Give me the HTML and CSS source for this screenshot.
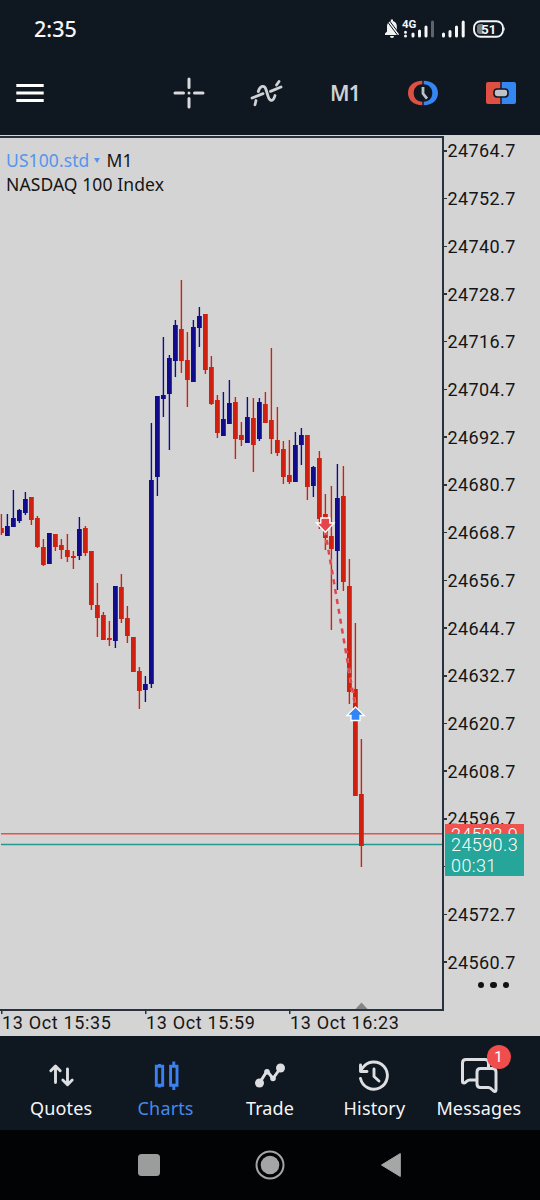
FILE: index.html
```html
<!DOCTYPE html>
<html lang="en">
<head>
  <meta charset="UTF-8">
  <title>US100.std M1</title>
  <link rel="stylesheet" href="styles.css">
</head>
<body>
  <div class="status">
    <span class="clock">2:35</span>
    <svg class="status-icons" width="122" height="22" viewBox="384 18 122 22">
      <path d="M385 35v-1.500l2-2v-5.500c0-2.500 1.800-4.500 3.800-5V19.500h2.200v1.500c2.200.5 3.800 2.500 3.800 5v5.500l2 2V35zM390 36h4a2 2 0 0 1-4 0z" fill="#f0f2f4"/>
      <path d="M386.500 20.500L398.500 36.500M388.500 19.500L399.500 34" stroke="#0f1720" stroke-width="1"/>
      <text x="402" y="28" class="net">4G</text>
      <g stroke="#f4f6f8" stroke-width="3" stroke-linecap="round">
        <path d="M405.500 32.200v.1M405.500 36v.1M413 34v2M419.500 31v5M426 27v9M443.500 34v2M450 31.500v4.500M456.500 27v9M463.200 22v14"/>
        <path d="M432.500 22v14" stroke="#5d646c"/>
      </g>
      <rect x="474" y="21.200" width="29" height="15.600" rx="6.500" fill="none" stroke="#f4f6f8" stroke-width="1.900"/>
      <path d="M483 24v10h-3q-3 0-3-3v-4q0-3 3-3z" fill="#777d83"/>
      <path d="M504 26.500q1.500 2.500 0 5z" fill="#f4f6f8"/>
      <text x="488.800" y="33.500" class="battery">51</text>
    </svg>
  </div>

  <div class="toolbar">
    <svg width="30" height="30" viewBox="15 78 30 30"><path d="M16.300 85.500h27.400M16.300 93h27.400M16.300 100.500h27.400" stroke="#fff" stroke-width="3"/></svg>
    <svg class="tool-cross" width="32" height="32" viewBox="173 77 32 32">
      <path d="M189 79v8.500M189 98.500v8.500M175 93h8.500M194.500 93h8.500M189 93v.01" stroke="#d8dadd" stroke-width="3" stroke-linecap="round"/>
    </svg>
    <svg class="tool-ind" width="34" height="32" viewBox="249 77 34 32">
      <g fill="none" stroke="#cfd2d5" stroke-width="2.800" stroke-linecap="round">
        <path d="M255 104.800L256 100.500M258.300 91.500C260 85.500 264.500 84.800 266 89.500L268 96C269.800 102.500 273.500 101.500 275 95.500M276.500 85L279 81.500"/>
        <path d="M252 98L263 93.600M270.500 91.400L281 87"/>
      </g>
    </svg>
    <span class="timeframe">M1</span>
    <svg class="tool-clock" width="32" height="28" viewBox="407 79 32 28">
      <path d="M422.300 80.800C413.500 80.800 408 86 408 93s5.500 12.200 14.300 12.200V101.800C417 101.500 413.700 98 413.700 93s3.300-8.500 8.600-8.800z" fill="#df5044"/>
      <path d="M423.700 80.800C432.500 80.800 438 86 438 93s-5.500 12.200-14.300 12.200V101.800C429 101.500 432.300 98 432.300 93s-3.300-8.500-8.600-8.800z" fill="#3486f2"/>
      <path d="M423 87v6.500l4 5.200" fill="none" stroke="#b9c2c8" stroke-width="2.800"/>
    </svg>
    <svg class="tool-trade" width="32" height="24" viewBox="485 81 32 24">
      <path d="M500.300 82H488a2 2 0 0 0-2 2v18a2 2 0 0 0 2 2h12.300z" fill="#df5044"/>
      <path d="M501.700 82H514a2 2 0 0 1 2 2v18a2 2 0 0 1-2 2h-12.300z" fill="#3486f2"/>
      <rect x="494" y="89" width="14" height="8" rx="3.200" fill="#bfc3c8" stroke="#0f1720" stroke-width="1.600"/>
    </svg>
  </div>

  <main class="chart">
    <div class="plot">
      <svg id="candles" width="442" height="871" viewBox="0 138 442 871"></svg>
      <div class="legend">
        <div><span class="symbol">US100.std</span><i class="caret"></i><span class="period">M1</span></div>
        <div class="desc">NASDAQ 100 Index</div>
      </div>
    </div>
    <div class="prices" id="prices">
      <div class="tag ask">24592.9</div>
      <div class="tag bid">24590.3<br>00:31</div>
      <div class="more"><i></i><i></i><i></i></div>
    </div>
    <div class="times">
      <span>13 Oct 15:35</span>
      <span>13 Oct 15:59</span>
      <span>13 Oct 16:23</span>
    </div>
  </main>

  <nav class="tabs">
    <a class="tab">
      <svg width="40" height="40" viewBox="41 1055 40 40">
        <path d="M55.500 1082.500v-15.500M50.800 1070.800l4.700-4.700 4.700 4.700M67.500 1069v15.500M62.800 1080l4.700 4.700 4.700-4.700" fill="none" stroke="#dcdee1" stroke-width="2.900" stroke-linecap="round" stroke-linejoin="round"/>
      </svg>
      <span>Quotes</span>
    </a>
    <a class="tab active">
      <svg width="40" height="40" viewBox="145 1055 40 40">
        <path d="M155.300 1066.300h6.400v19h-6.400zM169.600 1066.300h6.400v19h-6.400zM158.500 1064v2M158.500 1085.500v2M172.800 1061.500v4.500M172.800 1085.500v4.500" fill="none" stroke="#3b82f0" stroke-width="2.900"/>
      </svg>
      <span>Charts</span>
    </a>
    <a class="tab">
      <svg width="40" height="40" viewBox="250 1055 40 40">
        <path d="M259.500 1083l7.500-12 6 7.500 7.500-10.500" fill="none" stroke="#dcdee1" stroke-width="3" stroke-linejoin="round"/>
        <g fill="#dcdee1"><circle cx="259.500" cy="1083" r="4.500"/><circle cx="267" cy="1071.800" r="2.800"/><circle cx="273" cy="1078.500" r="2.800"/><circle cx="280.500" cy="1068" r="4.500"/></g>
      </svg>
      <span>Trade</span>
    </a>
    <a class="tab">
      <svg width="40" height="40" viewBox="354 1055 40 40">
        <path d="M360.500 1078.500A13.600 13.600 0 1 0 362.500 1068l-2 3M360.500 1065v6.500h6.500M374 1069v7.500l5 4.500" fill="none" stroke="#dcdee1" stroke-width="2.900" stroke-linecap="round" stroke-linejoin="round"/>
      </svg>
      <span>History</span>
    </a>
    <a class="tab">
      <svg width="40" height="40" viewBox="458 1055 40 40">
        <g fill="none" stroke="#dcdee1" stroke-width="3" stroke-linejoin="round">
          <path d="M475 1080h-6c-3.500 0-3.500 2.500-6 3-1.200 0-1.500-.5-1.500-1.500V1063q0-3.500 3.500-3.500h19q3.500 0 3.500 3.500v5"/>
          <path d="M479.500 1068.500h12q3.500 0 3.500 3.500v17.500c0 1.500-.5 2-1.500 2-2.500-.5-2.500-4-6-4h-8q-3.500 0-3.500-3.500v-12q0-3.500 3.500-3.500z"/>
        </g>
      </svg>
      <span>Messages</span>
      <b class="badge">1</b>
    </a>
  </nav>

  <div class="sysnav">
    <svg width="22" height="22"><rect width="22" height="22" rx="3.500" fill="#9b9d9c"/></svg>
    <svg width="30" height="30"><circle cx="15" cy="15" r="13.500" fill="none" stroke="#a5a5a7" stroke-width="2"/><circle cx="15" cy="15" r="9.300" fill="#a5a5a7"/></svg>
    <svg width="22" height="26"><path d="M20.300 1.500v23L1.500 13z" fill="#a5a7a7" stroke="#a5a7a7" stroke-linejoin="round"/></svg>
  </div>
  <script src="chart.js"></script>
</body>
</html>
```
FILE: styles.css
```css
* {
  box-sizing: border-box;
}
body {
  margin: 0;
  width: 540px;
  height: 1200px;
  overflow: hidden;
  background: #0f1720;
  color: #f4f6f8;
  font-family: Roboto, "Noto Sans", sans-serif;
}
svg {
  display: block;
}
.status {
  height: 58px;
  padding: 0 34px;
  display: flex;
  align-items: center;
  justify-content: space-between;
}
.clock {
  font: 500 21.5px "Noto Sans", sans-serif;
  margin-top: -2px;
}
.net {
  font: 700 11.5px Roboto, sans-serif;
  fill: #f4f6f8;
}
.battery {
  font: 700 13px Roboto, sans-serif;
  fill: #f4f6f8;
  text-anchor: middle;
}
.toolbar {
  height: 77px;
  padding: 0 23px 7px 15px;
  display: flex;
  align-items: center;
}
.tool-cross {
  margin-left: 128px;
}
.tool-ind {
  margin-left: 44px;
}
.timeframe {
  width: 124px;
  text-align: center;
  color: #cfd2d5;
  font: 600 21px/28px "Noto Sans", sans-serif;
  letter-spacing: -0.8px;
}
.tool-trade {
  margin-left: 46px;
}

.chart {
  height: 901px;
  display: grid;
  grid-template-columns: 444px 96px;
  grid-template-rows: 876px 25px;
  background: #d4d4d4;
  color: #151515;
}
.plot {
  position: relative;
  border: solid #26323d;
  border-width: 2px 2px 2px 0;
  margin-top: 1px;
}
.legend {
  position: absolute;
  left: 6px;
  top: 10px;
  font: 17.5px/24px "Noto Sans", sans-serif;
  letter-spacing: 0.1px;
}
.legend > div {
  display: flex;
  align-items: center;
  height: 24px;
}
.symbol {
  color: #5695ed;
}
.caret {
  border: 3px solid transparent;
  border-top: 5px solid #5695ed;
  border-bottom: 0;
  margin: 0 6px 0 5px;
}
.prices {
  position: relative;
  font-size: 18px;
  letter-spacing: 0.4px;
  margin-top: -8px;
}
.price {
  height: 47.72px;
  display: flex;
  align-items: center;
}
.price::before {
  content: "";
  width: 3px;
  height: 1.5px;
  background: #26323d;
}
.price span {
  margin-left: 0.5px;
}
.tag {
  position: absolute;
  left: 1px;
  width: 79px;
  padding-left: 6px;
  color: #fff;
  font-weight: 300;
  line-height: 21px;
}
.ask {
  top: 697px;
  height: 10px;
  overflow: hidden;
  background: #ef5350;
}
.bid {
  top: 707px;
  height: 42px;
  background: #26a69a;
}
.more {
  position: absolute;
  left: 34px;
  top: 855px;
  display: flex;
  gap: 6px;
}
.more i {
  width: 6.4px;
  height: 6.4px;
  border-radius: 50%;
  background: #111;
}
.times {
  grid-column: 1 / 3;
  display: flex;
  padding-left: 1px;
  font-size: 18px;
  line-height: 24px;
  letter-spacing: 0.65px;
}
.times span {
  width: 144px;
  padding-left: 1px;
  background: linear-gradient(#26323d, #26323d) 0 0 / 1.5px 3px no-repeat;
}

.tabs {
  height: 94px;
  padding: 0 9px;
  display: flex;
}
.tab {
  position: relative;
  flex: 1;
  padding-top: 19px;
  display: flex;
  flex-direction: column;
  align-items: center;
  font: 18px/26px "Noto Sans", sans-serif;
  letter-spacing: 0.15px;
}
.active {
  color: #4589ee;
}
.badge {
  position: absolute;
  left: 60px;
  top: 9px;
  width: 24px;
  height: 24px;
  border-radius: 50%;
  background: #ef4e4d;
  color: #fff;
  font: 15px/24px Roboto, sans-serif;
  text-align: center;
}
.sysnav {
  height: 70px;
  padding: 0 138px 0 138px;
  display: flex;
  align-items: center;
  justify-content: space-between;
  background: #020304;
}
```
FILE: chart.js
```js
// colour, high, body top, body bottom, low
const candles = [
  ["r", 514, 528, 533, 535], ["b", 514, 526, 536, 536], ["b", 490, 518, 527, 527],
  ["b", 509, 510, 521, 523], ["b", 492, 499, 513, 515], ["r", 497, 497, 520, 525],
  ["r", 516, 518, 547, 548], ["r", 539, 547, 565, 566], ["b", 533, 533, 564, 564],
  ["r", 534, 534, 547, 551], ["r", 539, 545, 550, 559], ["r", 534, 550, 557, 562],
  ["r", 551, 556, 558, 569], ["b", 517, 529, 556, 560], ["r", 526, 528, 553, 556],
  ["r", 551, 551, 605, 610], ["r", 583, 605, 618, 637], ["r", 612, 615, 640, 640],
  ["r", 621, 638, 640, 646], ["b", 586, 586, 641, 648], ["r", 574, 587, 619, 623],
  ["r", 606, 618, 636, 643], ["r", 637, 637, 672, 672], ["r", 667, 671, 691, 709],
  ["b", 676, 684, 690, 702], ["b", 423, 480, 684, 688], ["b", 396, 396, 477, 496],
  ["b", 337, 395, 399, 417], ["b", 355, 358, 394, 450], ["b", 320, 325, 361, 377],
  ["r", 280, 329, 361, 373], ["r", 332, 360, 380, 407], ["b", 320, 327, 382, 382],
  ["b", 307, 316, 328, 347], ["r", 314, 314, 370, 374], ["r", 356, 367, 404, 405],
  ["r", 395, 400, 433, 438], ["b", 392, 419, 436, 436], ["b", 380, 403, 424, 424],
  ["r", 397, 402, 439, 459], ["r", 422, 435, 440, 446], ["b", 397, 417, 443, 443],
  ["r", 398, 418, 445, 472], ["b", 398, 402, 439, 441], ["r", 392, 404, 423, 423],
  ["r", 348, 420, 439, 454], ["r", 407, 440, 453, 456], ["r", 441, 449, 477, 484],
  ["r", 440, 475, 482, 484], ["b", 432, 445, 482, 482], ["b", 428, 435, 445, 465],
  ["r", 435, 435, 487, 500], ["b", 466, 467, 486, 497], ["r", 451, 458, 519, 529],
  ["r", 494, 514, 538, 550], ["r", 486, 536, 549, 630], ["b", 464, 498, 551, 590],
  ["r", 466, 496, 582, 591], ["r", 559, 586, 692, 704], ["r", 623, 689, 796, 796],
  ["r", 739, 794, 846, 867]
];
const colors = { r: "#d02010", b: "#100c8c" };

let svg = '<path d="M1 833.800H442" stroke="#e8514d" stroke-width="1.500"/>' +
  '<path d="M1 844.500H442" stroke="#27988d" stroke-width="1.500"/>';
candles.forEach(([c, high, top, bottom, low], i) => {
  const x = 1.4 + i * 6;
  svg += `<path d="M${x} ${high}V${low}" stroke="${colors[c]}" stroke-width="1.4"/>`;
  svg += i === 0
    ? `<rect x="1.4" y="${top}" width="2.4" height="${bottom - top}" fill="${colors[c]}"/>`
    : `<rect x="${x - 2.4}" y="${top}" width="4.8" height="${bottom - top}" fill="${colors[c]}"/>`;
});
// closed position: sell and buy arrows joined by a dashed line
svg += '<path d="M325 530L355.500 708" stroke="#e4babb" stroke-width="3" stroke-dasharray="5 5"/>' +
  '<path d="M325 530L355.500 708" stroke="#e0434c" stroke-width="2.400" stroke-dasharray="5 5"/>' +
  '<path d="M320.800 518h9v5h4.200l-8.700 9.200-8.700-9.200h4.200z" fill="#e5454d" stroke="#fff" stroke-width="1.300"/>' +
  '<path d="M351 720.500h9v-5h4.200l-8.700-8.500-8.700 8.500h4.200z" fill="#3285f6" stroke="#fff" stroke-width="1.300"/>' +
  '<path d="M354.500 1010l7-7.500 7 7.500z" fill="#858585"/>';
document.getElementById("candles").innerHTML = svg;

// the 24584.7 row only keeps its tick, the bid tag covers it
let rows = "";
for (let i = 0; i < 18; i++) {
  const price = (24764.7 - i * 12).toFixed(1);
  rows += `<div class="price">${i === 15 ? "" : `<span>${price}</span>`}</div>`;
}
document.getElementById("prices").insertAdjacentHTML("afterbegin", rows);
```
